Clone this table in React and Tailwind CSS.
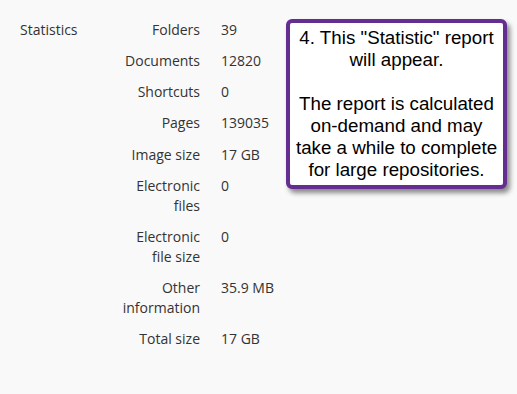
const rows = [
  ['Folders', '39'],
  ['Documents', '12820'],
  ['Shortcuts', '0'],
  ['Pages', '139035'],
  ['Image size', '17 GB'],
  ['Electronic files', '0'],
  ['Electronic file size', '0'],
  ['Other information', '35.9 MB'],
  ['Total size', '17 GB'],
]

export default function App() {
  return (
    <div className="relative w-[517px] h-[394px] bg-[#f9f9f9] overflow-hidden">
      <div className="flex pt-5 pl-5 text-[14px] leading-5 text-[#333] font-['Open_Sans',sans-serif]">
        <div className="w-[100px]">Statistics</div>
        <div className="flex flex-col gap-[11.15px]">
          {rows.map(([label, value]) => (
            <div key={label} className="flex">
              <div className="w-[80px] text-right">{label}</div>
              <div className="pl-[21px]">{value}</div>
            </div>
          ))}
        </div>
      </div>

      <div className="absolute left-[286px] top-[19px] w-[221px] h-[170px] bg-white border-4 border-[#662d91] rounded-[6px] shadow-[3px_4px_5px_rgba(0,0,0,0.45)] flex flex-col items-center pt-[4px] text-center text-[18.75px] leading-[22px] text-black font-['Liberation_Sans',Arial,sans-serif]">
        <p>4. This "Statistic" report<br />will appear.</p>
        <p className="mt-[22px]">
          The report is calculated<br />on-demand and may<br />take a while to complete<br />for large repositories.
        </p>
      </div>
    </div>
  )
}
